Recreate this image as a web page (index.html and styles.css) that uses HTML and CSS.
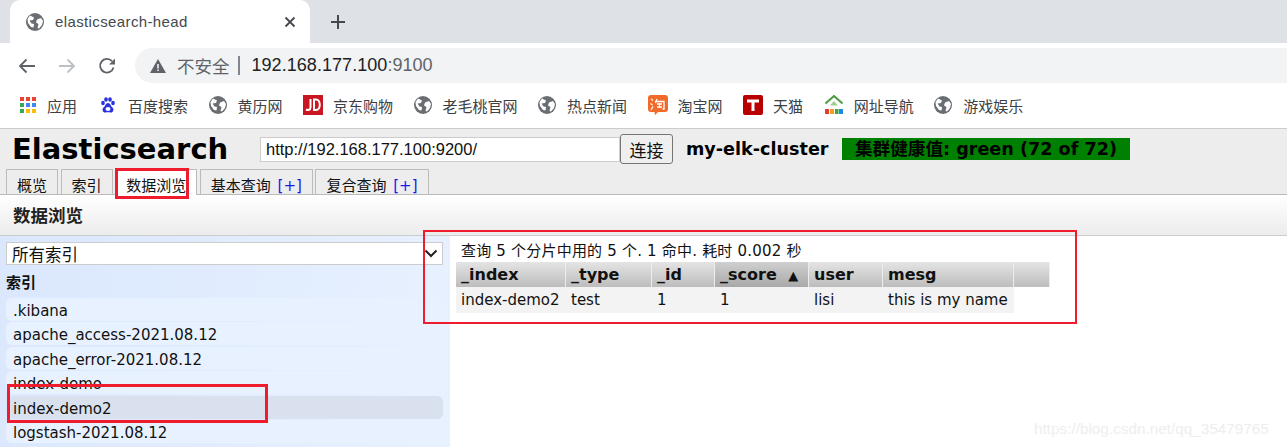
FILE: index.html
```html
<!DOCTYPE html>
<html lang="zh">
<head>
<meta charset="utf-8">
<title>elasticsearch-head</title>
<link rel="stylesheet" href="styles.css">
</head>
<body>
<svg class="defs" width="0" height="0"><defs>
<symbol id="globe" viewBox="0 0 18 18"><circle cx="9" cy="9" r="9" fill="#6a6e73"/><path d="M4 2.500 8 4.500 7 7 3.500 7.500 5.500 10.500 8 11 7.500 14.500 5 14 2 10 1.500 6ZM11 6.500 15 5 17 8 16 12 13 15.500 11.500 15 12.500 11 10 9.500Z" fill="#fff"/></symbol>
</defs></svg>

<div class="tabstrip">
  <div class="browser-tab">
    <svg class="ic18"><use href="#globe"/></svg>
    <span class="browser-tab-title">elasticsearch-head</span>
    <svg class="tab-close" width="12" height="12" viewBox="0 0 12 12"><path d="M1.500 1.500 10.500 10.500M10.500 1.500 1.500 10.500" stroke="#45484c" stroke-width="1.800"/></svg>
  </div>
  <svg class="new-tab" width="16" height="16" viewBox="0 0 16 16"><path d="M8 1V15M1 8H15" stroke="#45484c" stroke-width="2"/></svg>
</div>

<div class="toolbar">
  <svg class="nav nav-back" width="18" height="16" viewBox="0 0 18 16"><path d="M17 8H2M8.500 1.500 2 8l6.500 6.500" fill="none" stroke="#5f6368" stroke-width="1.800"/></svg>
  <svg class="nav nav-fwd" width="18" height="16" viewBox="0 0 18 16"><path d="M1 8H16M9.500 1.500 16 8l-6.500 6.500" fill="none" stroke="#bdc1c6" stroke-width="1.800"/></svg>
  <svg class="nav nav-reload" width="18" height="18" viewBox="0 0 18 18"><path d="M15.500 10.500A6.800 6.800 0 1 1 14 4.200" fill="none" stroke="#5f6368" stroke-width="1.800"/><path d="M17 1.500V7.500H11Z" fill="#5f6368"/></svg>
  <div class="omnibox">
    <svg class="warn" width="16" height="14" viewBox="0 0 16 14"><path d="M8 0 16 14H0Z" fill="#5f6368"/><path d="M7.200 5H8.800V9.500H7.200ZM7.200 10.500H8.800V12H7.200Z" fill="#f1f3f4"/></svg>
    <span class="insecure">不安全</span>
    <span class="omni-sep"></span>
    <span class="host">192.168.177.100</span><span class="port">:9100</span>
  </div>
</div>

<div class="bookmarks">
  <div class="bm bm-apps">
    <svg class="ic16" viewBox="0 0 16 16">
      <rect x="0" y="0" width="4" height="4" fill="#ea4335"/><rect x="6" y="0" width="4" height="4" fill="#ea4335"/><rect x="12" y="0" width="4" height="4" fill="#ea4335"/>
      <rect x="0" y="6" width="4" height="4" fill="#34a853"/><rect x="6" y="6" width="4" height="4" fill="#4285f4"/><rect x="12" y="6" width="4" height="4" fill="#4285f4"/>
      <rect x="0" y="12" width="4" height="4" fill="#34a853"/><rect x="6" y="12" width="4" height="4" fill="#fbbc05"/><rect x="12" y="12" width="4" height="4" fill="#fbbc05"/>
    </svg>
    <span>应用</span>
  </div>
  <div class="bm">
    <svg class="ic16" viewBox="0 0 16 16" fill="#2932e1"><ellipse cx="3" cy="6" rx="1.800" ry="2.300"/><ellipse cx="6" cy="2.500" rx="1.800" ry="2.300"/><ellipse cx="10" cy="2.500" rx="1.800" ry="2.300"/><ellipse cx="13" cy="6" rx="1.800" ry="2.300"/><path d="M8 6C5.500 6 5.500 9 3.500 10.500 1.500 12.500 3 16 5.500 15.500 7 15.200 9 15.200 10.500 15.500 13 16 14.500 12.500 12.500 10.500 10.500 9 10.500 6 8 6Z"/><ellipse cx="8" cy="12" rx="2.500" ry="2" fill="#fff"/></svg>
    <span>百度搜索</span>
  </div>
  <div class="bm"><svg class="ic18"><use href="#globe"/></svg><span>黄历网</span></div>
  <div class="bm">
    <svg class="ic20" viewBox="0 0 20 20"><rect width="20" height="20" fill="#c91623"/><path d="M7.500 4V12.500C7.500 15 5 15.500 3 14.500M11 4.500V15H13C18 15 18 4.500 13 4.500Z" fill="none" stroke="#fff" stroke-width="2"/></svg>
    <span>京东购物</span>
  </div>
  <div class="bm"><svg class="ic18"><use href="#globe"/></svg><span>老毛桃官网</span></div>
  <div class="bm"><svg class="ic18"><use href="#globe"/></svg><span>热点新闻</span></div>
  <div class="bm">
    <svg class="ic20" viewBox="0 0 20 20"><path d="M3 0H17Q20 0 20 3V14Q20 17 17 17H10L7 20 6.500 17H3Q0 17 0 14V3Q0 0 3 0Z" fill="#f3692a"/><path d="M3 4 5 5.500M2.500 8.500 4.500 10M3 15 5 11.500M7 6.500H16V14L14.500 14M9 4 7.500 8M11.500 8V13M9 9H14M9 12H14" fill="none" stroke="#fff" stroke-width="1.300"/></svg>
    <span>淘宝网</span>
  </div>
  <div class="bm">
    <svg class="ic20" viewBox="0 0 20 20"><rect width="20" height="20" rx="2" fill="#b80000"/><path d="M4 4.500H16V7.500H11.500V16H8.500V7.500H4Z" fill="#fff"/></svg>
    <span>天猫</span>
  </div>
  <div class="bm">
    <svg class="ic20" viewBox="0 0 20 20"><path d="M1.500 8.500 10 1 18.500 8.500" fill="none" stroke="#4a9b3f" stroke-width="2"/><path d="M6 10.500 10 6 14 10.500Z" fill="#9ccf8f"/><rect x="1" y="14" width="4" height="5" fill="#e53935"/><rect x="6" y="14" width="4" height="5" fill="#f0a020"/><rect x="11" y="14" width="3.500" height="5" fill="#43a047"/><rect x="15" y="14" width="4" height="5" fill="#1e88e5"/></svg>
    <span>网址导航</span>
  </div>
  <div class="bm"><svg class="ic18"><use href="#globe"/></svg><span>游戏娱乐</span></div>
</div>

<div class="app-top">
  <div class="app-head">
    <h1 class="brand">Elasticsearch</h1>
    <input class="conn-url" type="text" value="http://192.168.177.100:9200/">
    <button class="conn-btn" type="button">连接</button>
    <span class="cluster">my-elk-cluster</span>
    <span class="health">集群健康值: green (72 of 72)</span>
  </div>
  <div class="app-tabs">
    <div class="app-tab">概览</div>
    <div class="app-tab">索引</div>
    <div class="app-tab active">数据浏览</div>
    <div class="app-tab">基本查询 <span class="plus">[+]</span></div>
    <div class="app-tab">复合查询 <span class="plus">[+]</span></div>
  </div>
</div>

<div class="section-title">数据浏览</div>

<div class="browser">
  <aside class="side">
    <div class="select"><span>所有索引</span>
      <svg width="14" height="9" viewBox="0 0 14 9"><path d="M1.500 1.500 7 7l5.500-5.500" fill="none" stroke="#222" stroke-width="2"/></svg>
    </div>
    <div class="side-label">索引</div>
    <div class="idx-list">
      <div class="idx">.kibana</div>
      <div class="idx">apache_access-2021.08.12</div>
      <div class="idx">apache_error-2021.08.12</div>
      <div class="idx">index-demo</div>
      <div class="idx selected">index-demo2</div>
      <div class="idx">logstash-2021.08.12</div>
    </div>
  </aside>
  <main class="results">
    <div class="summary">查询 5 个分片中用的 5 个. 1 命中. 耗时 0.002 秒</div>
    <div class="grid">
      <div class="th">_index</div><div class="th">_type</div><div class="th">_id</div><div class="th sorted">_score <span class="arrow">▲</span></div><div class="th">user</div><div class="th">mesg</div><div class="th"></div>
      <div class="td">index-demo2</div><div class="td">test</div><div class="td">1</div><div class="td">1</div><div class="td">lisi</div><div class="td">this is my name</div>
    </div>
  </main>
</div>

<div class="mark mark-tab"></div>
<div class="mark mark-result"></div>
<div class="mark mark-idx"></div>
<div class="watermark">https://blog.csdn.net/qq_35479765</div>
</body>
</html>
```
FILE: styles.css
```css
* { box-sizing: border-box; }
html, body { margin: 0; padding: 0; height: 447px; overflow: hidden; background: #fff; }
body { position: relative; font-family: "DejaVu Sans", Verdana, "Noto Sans CJK SC", sans-serif; font-size: 15px; color: #111; }
.defs { position: absolute; }
.ic16 { width: 16px; height: 16px; flex: none; }
.ic18 { width: 18px; height: 18px; flex: none; }
.ic20 { width: 20px; height: 20px; flex: none; }

.tabstrip { height: 43px; background: #dee1e6; display: flex; align-items: center; padding-left: 10px; }
.browser-tab { width: 300px; height: 43px; background: #fff; border-radius: 10px 10px 0 0; display: flex; align-items: center; padding: 0 14px 0 16px; font-family: "Liberation Sans", "Noto Sans CJK SC", sans-serif; color: #45484c; }
.browser-tab-title { margin-left: 11px; font-size: 15px; letter-spacing: .38px; flex: 1; }
.new-tab { margin-left: 20px; }

.toolbar { height: 40px; background: #fff; display: flex; align-items: center; padding: 5px 0 0 18px; }
.nav { flex: none; }
.nav-fwd { margin-left: 22px; }
.nav-reload { margin-left: 22px; }
.omnibox { margin-left: 19px; flex: 1; height: 35px; background: #f1f3f4; border-radius: 18px 0 0 18px; display: flex; align-items: center; padding-left: 15px; font-family: "Liberation Sans", "Noto Sans CJK SC", sans-serif; font-size: 18px; }
.insecure { margin-left: 11px; color: #5f6368; font-size: 17.500px; }
.omni-sep { width: 2px; height: 19px; background: #80868b; margin: 0 12px 0 8px; }
.host { color: #202124; letter-spacing: .05px; }
.port { color: #5f6368; }

.bookmarks { height: 40px; background: #fff; display: flex; align-items: center; padding: 4px 0 0 20px; font-family: "Noto Sans CJK SC", sans-serif; font-size: 15px; color: #3c4043; }
.bm { display: flex; align-items: center; margin-right: 20.500px; gap: 12px; }
.bm-apps { margin-right: 23px; gap: 11px; }
.bm .ic20 { margin-right: -2px; }
.bm .ic18 { margin-right: -1px; }

.app-top { margin-top: 5px; height: 67px; background: #ededed; border-top: 1px solid #ccc; border-bottom: 1px solid #bbb; display: flex; flex-direction: column; padding-left: 5px; position: relative; }
.app-head { height: 41px; display: flex; align-items: center; }
.brand { margin: 0 0 0 7px; width: 248px; font-size: 29px; font-weight: bold; color: #000; line-height: 38px; }
.conn-url { width: 360px; height: 25px; padding: 0 5px; border: 1px solid #ccc; background: #fff; font-family: "Liberation Sans", sans-serif; font-size: 16.500px; color: #111; border-radius: 0; outline: none; }
.conn-btn { width: 53px; height: 30px; border: 1px solid #767676; border-radius: 3px; background: #efefef; font-family: "Noto Sans CJK SC", sans-serif; font-size: 17px; color: #111; padding: 0; }
.cluster { margin-left: 13px; font-size: 17.600px; font-weight: bold; color: #000; width: 156px; white-space: nowrap; }
.health { width: 288px; height: 22px; background: #008000; color: #000; font-weight: bold; font-size: 17.600px; line-height: 22px; text-align: center; white-space: nowrap; }

.app-tabs { display: flex; gap: 2.600px; margin-top: auto; padding-left: 1px; font-size: 15px; }
.app-tab { height: 25px; padding: 0 10px; border: 1px solid #bbb; border-bottom: 0; background: #ededed; line-height: 33px; overflow: hidden; white-space: nowrap; }
.app-tab.active { background: #fff; height: 26px; margin-bottom: -1px; position: relative; }
.plus { color: #1a1aee; margin-left: 2px; }

.section-title { height: 41px; background: linear-gradient(#fff, #ececec); border-bottom: 1px solid #ccc; font-weight: bold; font-size: 17.500px; line-height: 39px; padding-left: 13px; font-family: "Noto Sans CJK SC", sans-serif; color: #222; }

.browser { display: flex; height: 211px; }
.side { width: 450px; flex: none; padding: 6px 6px 0; background: linear-gradient(100deg, #dae7fd, #e8f1ff); }
.select { height: 23px; width: 437px; background: #fff; border: 1px solid #ccc; display: flex; align-items: center; justify-content: space-between; padding: 0 4px 0 5px; font-family: "Noto Sans CJK SC", sans-serif; font-size: 16.500px; color: #111; }
.side-label { margin-top: 7px; height: 20px; line-height: 20px; font-weight: bold; font-size: 15px; font-family: "Noto Sans CJK SC", sans-serif; }
.idx-list { margin-top: 6px; display: flex; flex-direction: column; gap: 1.400px; }
.idx { flex: none; height: 23px; margin-right: 1px; line-height: 27px; padding-left: 7px; background: #e8f1ff; border-radius: 6px; white-space: nowrap; }
.idx.selected { background: #d8e1ed; margin-left: 3px; padding-left: 4px; }

.results { flex: 1; background: #fff; padding: 5px 0 0 6px; }
.summary { height: 21px; line-height: 21px; padding-left: 5px; font-size: 15px; letter-spacing: .2px; color: #111; white-space: nowrap; }
.grid { display: grid; grid-template-columns: 110px 86px 63px 94px 74px 131px 36px; width: 594px; }
.th { height: 25px; line-height: 25px; padding-left: 5px; font-weight: bold; font-size: 16px; background: linear-gradient(#e4e4e4, #bdbdbd); border-right: 1px solid #ededed; color: #111; white-space: nowrap; }
.th.sorted { background: linear-gradient(#cfcfcf, #a9a9a9); }
.arrow { font-size: 13px; margin-left: 6px; }
.td { height: 26px; line-height: 26px; padding-left: 5px; background: #f3f3f3; white-space: nowrap; }

.mark { position: absolute; border: 3px solid #ee1c2c; }
.mark-tab { left: 115px; top: 168px; width: 74px; height: 31px; }
.mark-result { left: 423px; top: 230px; width: 654px; height: 94px; border-width: 2px; }
.mark-idx { left: 7px; top: 384px; width: 261px; height: 39px; }
.watermark { position: absolute; left: 1034px; top: 420px; font-family: "Liberation Sans", sans-serif; font-size: 15.300px; color: #eeeeee; white-space: nowrap; }
```
